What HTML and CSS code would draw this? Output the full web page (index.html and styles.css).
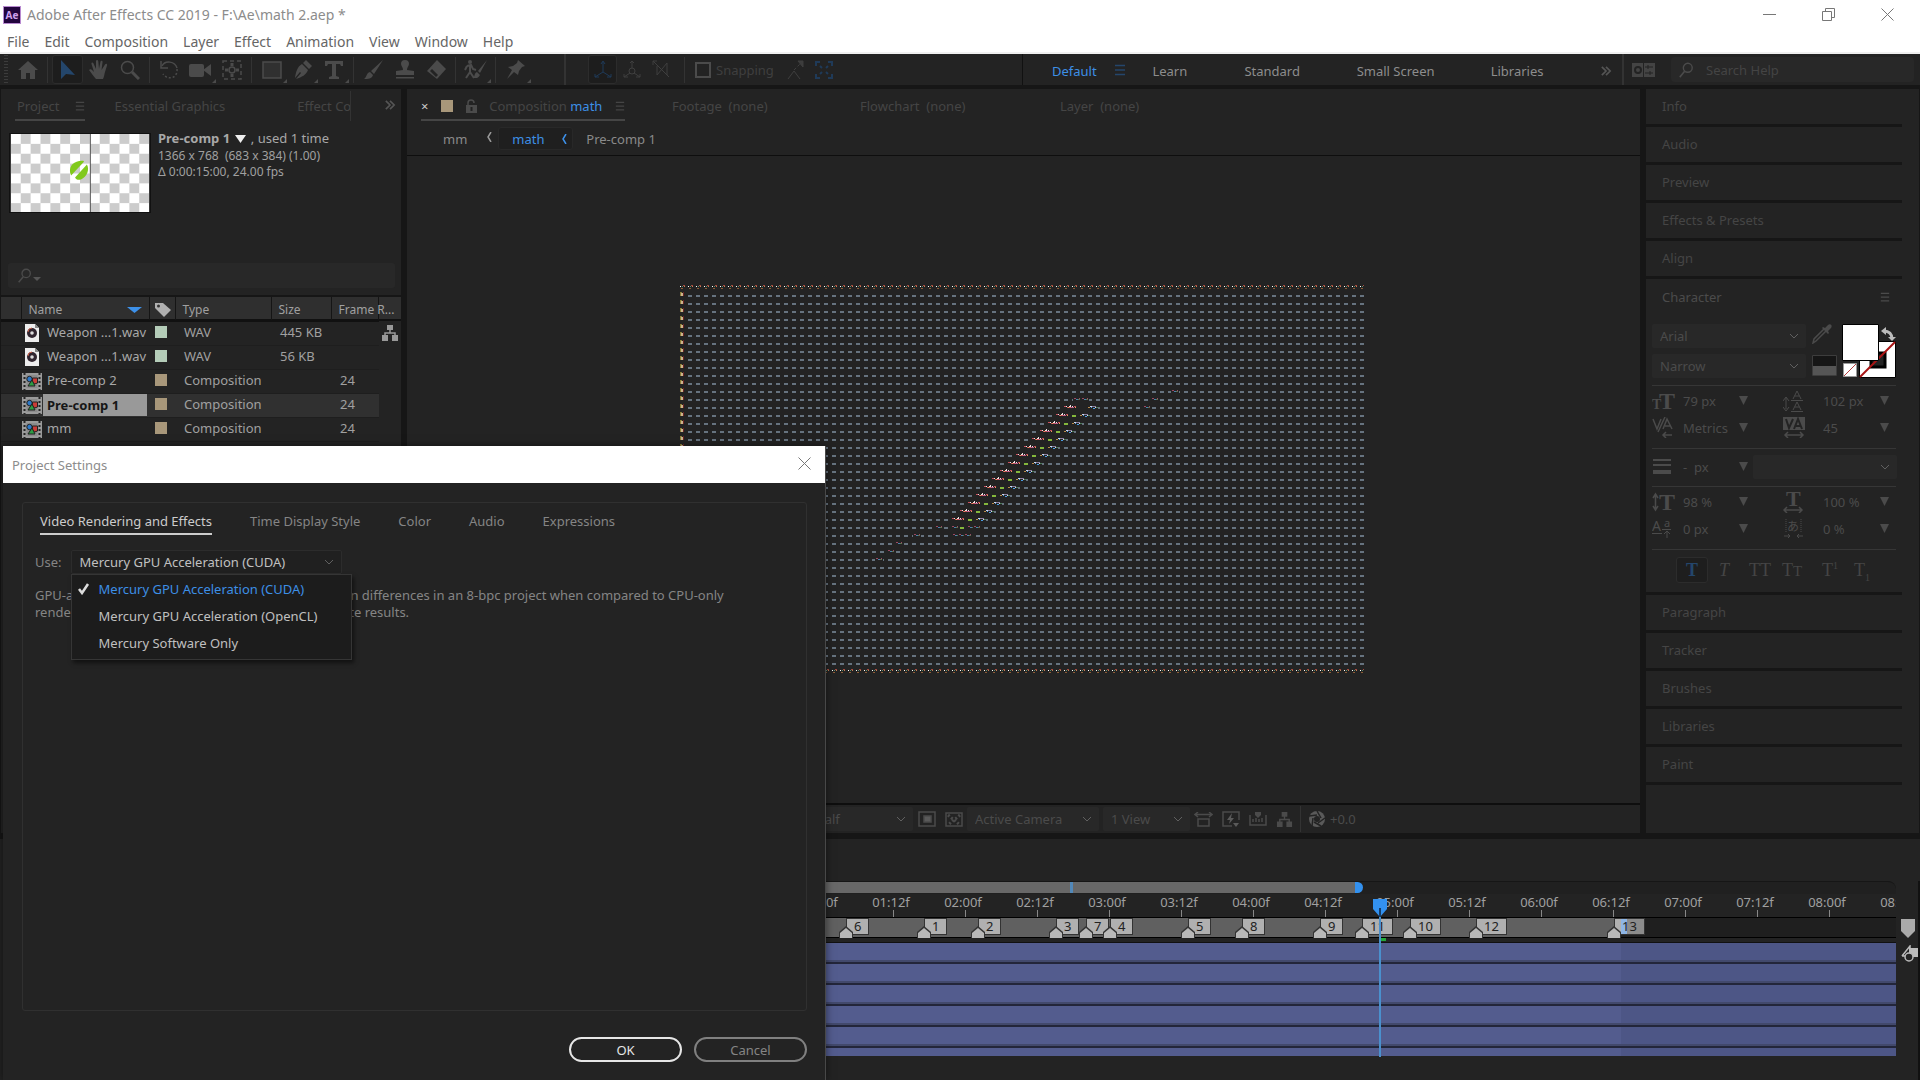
FILE: index.html
```html
<!DOCTYPE html>
<html lang="en">
<head>
    <meta charset="UTF-8">
    <meta name="viewport" content="width=device-width, initial-scale=1.0">
    <title>Adobe After Effects CC 2019</title>
    <link rel="stylesheet" href="styles.css">
</head>
<body>
    <svg class="defs" aria-hidden="true">
        <symbol id="menu" viewBox="0 0 10 12"><path d="M0 1.5h10M0 6h10M0 10.500h10" stroke="currentColor" stroke-width="1.500"/></symbol>
        <symbol id="more" viewBox="0 0 12 12"><path d="M1 1l5 5-5 5M6 1l5 5-5 5" fill="none" stroke="currentColor" stroke-width="2"/></symbol>
        <symbol id="tri" viewBox="0 0 9 9"><path d="M0 0h9L4.500 9z" fill="currentColor"/></symbol>
        <symbol id="search" viewBox="0 0 18 18"><circle cx="11" cy="6.500" r="5" fill="none" stroke="currentColor" stroke-width="1.600"/><path d="M7.500 10.500L2 17" stroke="currentColor" stroke-width="1.800"/></symbol>
        <symbol id="flow" viewBox="0 0 18 18"><path d="M6 1h6v5H6zM1 11h6v6H1zM11 11h6v6h-6z" fill="currentColor"/><path d="M9 5v4M4 12V9h10v3" fill="none" stroke="currentColor" stroke-width="1.500"/></symbol>
        <symbol id="wav" viewBox="0 0 20 20"><path d="M3 1h10l4 4v14H3z" fill="#ededed"/><path d="M13 1v4h4z" fill="#888"/><circle cx="10" cy="10" r="5" fill="#30252f"/><path d="M6 9a4 4 0 0 1 4-4" fill="none" stroke="#c85e48"/><circle cx="10" cy="10" r="1.800" fill="#ddd"/></symbol>
        <symbol id="comp" viewBox="0 0 20 17"><path d="M0 0h20v17H0z" fill="#9b9b9b"/><path d="M2.500 0v17M17.500 0v17" stroke="#252525" stroke-width="2" stroke-dasharray="2 2"/><path d="M4.500 2h11v13h-11z" fill="#8b8b8b"/><circle cx="7.500" cy="6" r="2.700" fill="#2d79c8" stroke="#222"/><path d="M10.500 5h5v5l-3 1-2-2z" fill="#ca3c37" stroke="#222"/><path d="M6 13l4-6 3 6z" fill="#2d9c43" stroke="#222"/></symbol>
    </svg>

    <div class="app">
        <header class="titlebar">
            <svg class="logo" viewBox="0 0 18 18"><rect width="18" height="18" fill="#b88ad0"/><rect x="1" y="1" width="16" height="16" fill="#22053e"/><text x="9" y="12.500" text-anchor="middle">Ae</text></svg>
            <h1>Adobe After Effects CC 2019 - F:\Ae\math 2.aep *</h1>
            <div class="window-buttons">
                <button aria-label="Minimize"><svg width="13" height="13"><path d="M0 6.500h13" stroke="#777"/></svg></button>
                <button aria-label="Restore"><svg width="13" height="13"><path d="M.5 3.500h9v9h-9zM3.500 3.500v-3h9v9h-3" fill="none" stroke="#777"/></svg></button>
                <button aria-label="Close"><svg width="13" height="13"><path d="M.5.5l12 12M12.500.5l-12 12" stroke="#777"/></svg></button>
            </div>
        </header>

        <nav class="menubar">
            <button>File</button>
            <button>Edit</button>
            <button>Composition</button>
            <button>Layer</button>
            <button>Effect</button>
            <button>Animation</button>
            <button>View</button>
            <button>Window</button>
            <button>Help</button>
        </nav>

        <div class="toolbar">
            <div class="tools">
                <svg class="grip" width="4" height="30"><path d="M2 0v30" stroke="#3c3c3c" stroke-width="4" stroke-dasharray="1 2"/></svg>
                <button aria-label="Home"><svg width="20" height="20"><path d="M10 1L0 10h3v9h5v-6h4v6h5v-9h3z"/></svg></button>
                <i class="sep"></i>
                <button class="active" aria-label="Selection"><svg width="20" height="20"><path d="M3 0v19l5-5 9 1z"/></svg></button>
                <button aria-label="Hand"><svg width="20" height="20"><path d="M7 19c-2-2-4-5-7-9 1-1.500 2.500-1 4 1L5 12 2.500 4C2 2 4 2 4.500 3.500L7 9V1.500c0-2 2-2 2.300 0L10 9l1.500-7.500c.5-1.500 2.500-1 2 1L12.500 10 16 4.500c1-1.300 2.500-.5 2 1L16 12c-1 4-1 5-2 7z"/></svg></button>
                <button aria-label="Zoom"><svg class="line" width="20" height="20"><circle cx="7.500" cy="7.500" r="6"/><path d="M12 12l7 7" stroke-width="3"/></svg></button>
                <i class="sep"></i>
                <button aria-label="Rotation"><svg class="line" width="20" height="20"><path d="M2 6c3-6 13-5 15 2" /><path d="M17 9c1 9-9 12-14 5" stroke-dasharray="2 2"/><path d="M1 1v7h7" /></svg></button>
                <button class="more-tools" aria-label="Camera"><svg width="23" height="18"><rect y="3" width="15" height="13" rx="2"/><path d="M14 9l8-6v12z"/></svg></button>
                <button aria-label="Pan Behind"><svg class="line" width="20" height="20"><path d="M1 1h18v18H1z" stroke-dasharray="4 3"/><circle cx="10" cy="10" r="3"/><path d="M10 3v3M10 14v3M3 10h3M14 10h3" stroke-width="3"/></svg></button>
                <i class="sep"></i>
                <button class="more-tools" aria-label="Rectangle"><svg class="line" width="20" height="18"><rect x="1" y="1" width="18" height="16" fill="#303030"/></svg></button>
                <button class="more-tools" aria-label="Pen"><svg width="20" height="20"><path d="M13 0l6 6-3 3-6-6zM9 4l6 6c-2 5-6 7-12 9l5-6-1-1-5 6C3 12 4 7 9 4z"/></svg></button>
                <button class="more-tools" aria-label="Type"><svg width="18" height="18"><path d="M0 0h18v5h-2l-1-2h-4v12l3 1v2H4v-2l3-1V3H3L2 5H0z"/></svg></button>
                <i class="sep"></i>
                <button aria-label="Brush"><svg width="20" height="20"><path d="M19 0L7 11l3 3zM6 12l3 3c-1 4-5 4-9 4 3-2 2-6 6-7z"/></svg></button>
                <button aria-label="Clone Stamp"><svg width="20" height="20"><path d="M8 10C8 7 6 6 6 4a4 4 0 0 1 8 0c0 2-2 3-2 6l7 1v4H1v-4zM1 17h18v1.500H1z"/></svg></button>
                <button aria-label="Eraser"><svg width="20" height="20"><path d="M11 0l9 9-9 10L1 11z"/><path d="M4 11l6 6 2-2-6-6z" fill="#232323"/></svg></button>
                <i class="sep"></i>
                <button class="more-tools" aria-label="Roto Brush"><svg width="24" height="20"><circle cx="6" cy="2" r="2"/><path d="M3 6l4-1 2 4 3 1M6 6v6l4 6M6 12l-4 6M3 6L1 10" fill="none" stroke="#4b4b4b" stroke-width="2"/><path d="M23 0L14 11l2 2zM13 12l3 3c-2 4-4 3-7 3 2-1 1-5 4-6z"/></svg></button>
                <i class="sep"></i>
                <button class="more-tools" aria-label="Puppet Pin"><svg width="20" height="20"><path d="M12 0l7 6-3 1-3 4-1 4-4-3-7 7 5-9-4-3 5-1 4-3z"/></svg></button>
            </div>
            <div class="tools axes">
                <button class="active" aria-label="Local Axis Mode"><svg class="line" width="20" height="20"><path d="M10 12V2M8 4l2-3 2 3M10 12l-8 5M2 14v3h4M10 12l8 5M18 14v3h-4"/></svg></button>
                <button aria-label="World Axis Mode"><svg class="line" width="20" height="20"><circle cx="10" cy="11" r="3"/><path d="M10 8V1M8 3l2-2 2 2M8 13l-6 4M2 14v3h4M12 13l6 4M18 14v3h-4"/></svg></button>
                <button aria-label="View Axis Mode"><svg class="line" width="20" height="20"><path d="M2 1l16 16M2 5V1h4M6 6v9l10-12v12l-4-4"/></svg></button>
                <i class="sep"></i>
                <label class="snap"><input type="checkbox">Snapping</label>
                <button aria-label="Snap edges"><svg class="line" width="20" height="20"><path d="M3 19l6-8 6 8"/><path d="M9 10l7-7" stroke-dasharray="3 2"/><path d="M13 1h5v6z" fill="#3c3c3c"/></svg></button>
                <button class="blue" aria-label="Snap features"><svg class="line" width="20" height="20"><path d="M2 6V2h4M14 2h4v4M18 14v4h-4M6 18H2v-4M6 6l2 2M14 6l-2 2M6 14l2-2M14 14l-2-2" stroke-width="2"/></svg></button>
            </div>
            <div class="workspaces">
                <button class="current">Default</button>
                <button class="ws-menu" aria-label="Workspace menu"><svg width="10" height="12"><use href="#menu"/></svg></button>
                <button>Learn</button>
                <button>Standard</button>
                <button>Small Screen</button>
                <button>Libraries</button>
                <button class="ws-more" aria-label="More workspaces"><svg width="12" height="10"><use href="#more"/></svg></button>
            </div>
            <div class="help">
                <svg width="23" height="14"><path d="M0 0h23v14H0z" fill="#444"/><circle cx="6" cy="7" r="3" fill="none" stroke="#232323" stroke-width="2"/><path d="M13 4h8M13 10h8M16 2v4M18 8v4M11.500 0v14" stroke="#232323"/></svg>
                <label class="help-box"><svg width="16" height="16"><use href="#search"/></svg><input type="text" placeholder="Search Help" aria-label="Search Help"></label>
            </div>
        </div>

        <main class="panels">
            <section class="panel project">
                <div class="tabs">
                    <button class="tab selected">Project <svg width="10" height="10"><use href="#menu"/></svg></button>
                    <button class="tab">Essential Graphics</button>
                    <button class="tab cut">Effect Controls</button>
                    <button class="tab-more" aria-label="More panels"><svg width="12" height="10"><use href="#more"/></svg></button>
                </div>
                <div class="item-info">
                    <svg class="thumb" viewBox="0 0 140 79">
                        <defs><pattern id="checker" width="20" height="20" patternUnits="userSpaceOnUse"><path d="M0 0h20v20H0z" fill="#fff"/><path d="M10 0h10v10H10zM0 10h10v10H0z" fill="#ccc"/></pattern></defs>
                        <rect width="140" height="79" fill="url(#checker)"/>
                        <path d="M80.500 0v79" stroke="#555"/>
                        <path d="M60 39c-1-7 4-12 12-12 1 0 2 0 2 1L61 42zM65 44l12-13c3 5 0 13-6 15-3 1-5 0-6-2z" fill="#81c91c"/>
                    </svg>
                    <div class="item-text">
                        <p class="item-name"><b>Pre-comp 1</b> <svg width="11" height="8"><path d="M0 0h11L5.500 8z" fill="#eee"/></svg> , used 1 time</p>
                        <p>1366 x 768 &nbsp;(683 x 384) (1.00)</p>
                        <p>Δ 0:00:15:00, 24.00 fps</p>
                    </div>
                </div>
                <label class="project-search"><svg width="15" height="15"><use href="#search"/></svg><svg width="8" height="4" viewBox="0 0 8 4"><path d="M0 0h8L4 4z" fill="#555"/></svg><input type="text" aria-label="Search project"></label>
                <div class="items">
                    <table>
                        <thead>
                            <tr><th class="c-icon"></th><th class="c-name">Name <svg width="15" height="6"><path d="M0 0h15L7.500 6z" fill="#3d91ea"/></svg></th><th class="c-tag"><svg width="16" height="15"><path d="M0 1h8l8 7-7 7-9-9z" fill="#b0b0b0"/><circle cx="3.500" cy="4" r="1.500" fill="#333"/></svg></th><th class="c-type">Type</th><th class="c-size">Size</th><th class="c-rate">Frame R...</th></tr>
                        </thead>
                        <tbody>
                            <tr><td><svg width="20" height="20"><use href="#wav"/></svg></td><td>Weapon ...1.wav</td><td><i class="swatch green"></i></td><td>WAV</td><td>445 KB</td><td></td></tr>
                            <tr><td><svg width="20" height="20"><use href="#wav"/></svg></td><td>Weapon ...1.wav</td><td><i class="swatch green"></i></td><td>WAV</td><td>56 KB</td><td></td></tr>
                            <tr><td><svg width="20" height="17"><use href="#comp"/></svg></td><td>Pre-comp 2</td><td><i class="swatch"></i></td><td>Composition</td><td></td><td>24</td></tr>
                            <tr class="picked"><td><svg width="20" height="17"><use href="#comp"/></svg></td><td><span>Pre-comp 1</span></td><td><i class="swatch"></i></td><td>Composition</td><td></td><td>24</td></tr>
                            <tr><td><svg width="20" height="17"><use href="#comp"/></svg></td><td>mm</td><td><i class="swatch"></i></td><td>Composition</td><td></td><td>24</td></tr>
                        </tbody>
                    </table>
                    <button class="flow-btn" aria-label="Flowchart"><svg width="18" height="18"><use href="#flow"/></svg></button>
                </div>
            </section>

            <section class="panel viewer">
                <div class="tabs">
                    <div class="tab selected comp-tab">
                        <button aria-label="Close tab">×</button>
                        <i class="swatch"></i>
                        <svg class="lock" width="11" height="14"><path d="M2 6V4c0-4 6-4 6 0" fill="none" stroke="#4b4b4b" stroke-width="1.500"/><path d="M0 6h11v8H0z" fill="#4b4b4b"/><path d="M5.500 8v4" stroke="#222" stroke-width="2"/></svg>
                        <span>Composition <b>math</b></span>
                        <svg width="10" height="10"><use href="#menu"/></svg>
                    </div>
                    <button class="tab footage">Footage &nbsp;(none)</button>
                    <button class="tab flowchart">Flowchart &nbsp;(none)</button>
                    <button class="tab">Layer &nbsp;(none)</button>
                </div>
                <nav class="crumbs">
                    <button>mm</button>
                    <svg width="5" height="10"><path d="M4 0L1 5l3 5" fill="none" stroke="#999" stroke-width="1.500"/></svg>
                    <button class="here">math <svg width="5" height="10"><path d="M4 0L1 5l3 5" fill="none" stroke="#3d91ea" stroke-width="1.500"/></svg></button>
                    <button>Pre-comp 1</button>
                </nav>
                <div class="stage">
                    <svg class="frame" width="684" height="388" shape-rendering="crispEdges">
                        <defs>
                            <pattern id="dash" width="8" height="8" patternUnits="userSpaceOnUse"><path d="M0 0h4v2H0z" fill="#66737f"/></pattern>
                            <pattern id="edge-h" width="8" height="4" patternUnits="userSpaceOnUse"><path d="M0 1h1v1H0z" fill="#fff"/><path d="M3 0h2v1H3z" fill="#a34a3e"/><path d="M2 1h1v1H2z" fill="#5d8f70"/><path d="M4 1h1v1H4z" fill="#c87a52"/><path d="M1 3h2v1H1z" fill="#8b5b35"/></pattern>
                            <pattern id="edge-v" width="4" height="8" patternUnits="userSpaceOnUse"><path d="M0 0h2v4H0z" fill="#8d8038"/><path d="M1 1h2v3H1z" fill="#cdb48e"/><path d="M3 0h1v4H3z" fill="#6d2525"/></pattern>
                            <g id="streak">
                                <path d="M-17 0h35v4h-35z" fill="#232323"/>
                                <path d="M-16 1h2v1h-2zM-13 2h4v1h-4zM-6 1h2v1h-2z" fill="#c8505e"/>
                                <path d="M-14 1h1v1h-1zM-11 1h2v1h-2zM-8 1h1v1h-1zM-10 0h1v1h-1z" fill="#efe2e2"/>
                                <path d="M-9 2h3v1h-3z" fill="#c0608c"/>
                                <path d="M-12 2h1v1h-1zM-5 2h1v1h-1z" fill="#f0a05a"/>
                                <path d="M8 2h2v1H8z" fill="#b88a4a"/>
                                <path d="M10 1h2v1h-2zM15 2h1v1h-1z" fill="#cfd8e8"/>
                                <path d="M11 2h1v1h-1zM13 3h2v1h-2z" fill="#4a9ce0"/>
                                <path d="M12 1h4v1h-4z" fill="#8a7fa0"/>
                                <path d="M16 2h2v1h-2z" fill="#4c7a58"/>
                            </g>
                            <g id="core"><use href="#streak"/><path d="M0 2h4v2H0z" fill="#84b83c"/></g>
                            <g id="speck"><path d="M-1 0h8v4h-8z" fill="#232323"/><path d="M0 1h2v1H0zM5 1h1v1H5z" fill="#9b4862"/><path d="M2 2h2v1H2z" fill="#4d7fae"/><path d="M4 2h2v1H4z" fill="#5d7050"/></g>
                        </defs>
                        <svg x="8" y="10" width="676" height="370"><rect width="676" height="370" fill="url(#dash)"/></svg>
                        <rect width="684" height="4" fill="url(#edge-h)"/>
                        <svg x="0" y="384" width="684" height="4"><rect width="684" height="4" fill="url(#edge-h)"/></svg>
                        <svg x="0" y="7" width="4" height="376"><rect width="4" height="376" fill="url(#edge-v)"/></svg>
                        <use href="#speck" x="394" y="112"/>
                        <use href="#speck" x="402" y="112"/>
                        <use href="#streak" x="400" y="120"/>
                        <use href="#core" x="392" y="128"/>
                        <use href="#core" x="384" y="136"/>
                        <use href="#core" x="376" y="144"/>
                        <use href="#core" x="368" y="152"/>
                        <use href="#core" x="360" y="160"/>
                        <use href="#core" x="352" y="168"/>
                        <use href="#core" x="344" y="176"/>
                        <use href="#core" x="336" y="184"/>
                        <use href="#core" x="328" y="192"/>
                        <use href="#core" x="320" y="200"/>
                        <use href="#core" x="312" y="208"/>
                        <use href="#core" x="304" y="216"/>
                        <use href="#core" x="296" y="224"/>
                        <use href="#core" x="288" y="232"/>
                        <use href="#speck" x="272" y="240"/>
                        <path d="M280 242h4v2h-4z" fill="#84b83c"/>
                        <use href="#speck" x="288" y="240"/>
                        <use href="#speck" x="294" y="240"/>
                        <use href="#speck" x="273" y="248"/>
                        <use href="#speck" x="279" y="248"/>
                        <use href="#speck" x="285" y="248"/>
                        <use href="#speck" x="492" y="104"/>
                        <use href="#speck" x="472" y="112"/>
                        <use href="#speck" x="464" y="120"/>
                        <use href="#speck" x="256" y="240"/>
                        <use href="#speck" x="234" y="248"/>
                        <use href="#speck" x="216" y="256"/>
                        <use href="#speck" x="208" y="264"/>
                        <use href="#speck" x="196" y="272"/>
                    </svg>
                </div>
                <div class="view-bar">
                    <select class="res" aria-label="Resolution"><option>Half</option></select>
                    <button aria-label="Region of Interest"><svg class="line" width="18" height="16"><path d="M1 1h16v14H1z"/><path d="M6 5h7v6H6z" fill="#5a5a5a"/></svg></button>
                    <button aria-label="Transparency Grid"><svg class="line" width="18" height="15"><path d="M1 1h16v13H1z"/><path d="M3 3l12 10M15 3L3 13" stroke-dasharray="2 2" stroke-width="3"/></svg></button>
                    <select class="cam" aria-label="3D View"><option>Active Camera</option></select>
                    <select class="views" aria-label="View Layout"><option>1 View</option></select>
                    <button aria-label="Pixel Aspect Ratio"><svg class="line" width="19" height="15"><path d="M1 2.500h17M4 0L1 2.500 4 5M15 0l3 2.500L15 5M4 7h11v7H4z"/></svg></button>
                    <button aria-label="Fast Previews"><svg class="line" width="18" height="17"><path d="M10 15H1V1h16v8"/><path d="M10 2L5 9h3l-1 4 5-6H9zM11 12h6l-3 4z" fill="#5a5a5a" stroke="none"/></svg></button>
                    <button aria-label="Timeline"><svg class="line" width="18" height="14"><path d="M1 3v10h16V3M4 10V7M7 10V6M10 10V7M13 10V6"/><path d="M6 0h6v3L9 6 6 3z" fill="#4b4b4b" stroke="none"/></svg></button>
                    <button aria-label="Flowchart"><svg width="17" height="17"><use href="#flow"/></svg></button>
                    <i class="sep"></i>
                    <button aria-label="Reset Exposure"><svg width="18" height="18"><circle cx="9" cy="9" r="8" fill="#5a5a5a"/><circle cx="9" cy="9" r="3" fill="#232323"/><path d="M9 1l4 7M17 8l-7 5M13 16l-7-4M4 16l1-8M1 6l8-1" fill="none" stroke="#232323" stroke-width="1.500"/></svg></button>
                    <span>+0.0</span>
                </div>
            </section>

            <aside class="panel side">
                <div class="side-list">
                    <button class="side-tab">Info</button>
                    <button class="side-tab">Audio</button>
                    <button class="side-tab">Preview</button>
                    <button class="side-tab">Effects &amp; Presets</button>
                    <button class="side-tab">Align</button>
                    <div class="character">
                        <h2>Character <svg width="10" height="10"><use href="#menu"/></svg></h2>
                        <div class="fonts">
                            <div class="font-selects">
                                <select aria-label="Font family"><option>Arial</option></select>
                                <select aria-label="Font style"><option>Narrow</option></select>
                            </div>
                            <div class="pickers">
                                <svg width="20" height="20"><path d="M14 7L4 17l-3 2 1-4L12 5" fill="none" stroke="#4b4b4b" stroke-width="1.500"/><path d="M10 4l6 6 1-1-1-2 3-3c2-3-1-5-3-3l-3 3-2-1z" fill="#4b4b4b"/></svg>
                                <svg width="25" height="21"><path d="M.5.5h24v20H.5z" fill="#161616" stroke="#3d3d3d"/><path d="M1 11h23v9H1z" fill="#555"/></svg>
                            </div>
                            <svg width="54" height="54">
                                <path d="M17.500 17.500h36v36h-36z" fill="#fff" stroke="#000"/><path d="M29 29h14v14H29z" fill="#232323" stroke="#000" stroke-width="3"/><path d="M18 53l35-35" stroke="#a81414" stroke-width="2"/>
                                <path d="M.5.5h36v36H.5z" fill="#fff" stroke="#000"/>
                                <path d="M1.500 39.500h13v13h-13z" fill="#fff" stroke="#999"/><path d="M2 52l12-12" stroke="#b84040"/>
                                <path d="M42 7c5 0 8 3 8 8" fill="none" stroke="#bbb" stroke-width="3"/><path d="M39 7l5-4v8zM46 13h8l-4 4z" fill="#bbb"/>
                            </svg>
                        </div>
                        <div class="metrics">
                            <svg width="24" height="20"><text class="ic" x="0" y="18" font-size="14">T</text><text class="ic" x="7" y="18" font-size="24">T</text></svg><input type="text" value="79 px" aria-label="Font size"><svg class="tri"><use href="#tri"/></svg>
                            <svg width="20" height="22"><path d="M10 9l4-8 4 8M12 6h4M10 20l4-8 4 8M12 17h4" fill="none" stroke="#4b4b4b"/><path d="M3 8v11M0 11l3-4 3 4M0 17l3 4 3-4M8 10.500h12M8 21.500h12" fill="none" stroke="#4b4b4b"/></svg><input type="text" value="102 px" aria-label="Leading"><svg class="tri"><use href="#tri"/></svg>
                            <svg width="22" height="21"><path d="M1 2l4 10 4-10M6 15L13 0M11 12l4-10 5 10M13 9h5" fill="none" stroke="#4b4b4b" stroke-width="1.500"/><path d="M11 18h9M14 15l-3 3 3 3" fill="none" stroke="#4b4b4b" stroke-width="1.500"/></svg><input type="text" value="Metrics" aria-label="Kerning"><svg class="tri"><use href="#tri"/></svg>
                            <svg width="23" height="21"><path d="M0 0h22v13H0z" fill="#4b4b4b"/><path d="M3 2l3 9 4-9M11 12l4-10 4 10M13 9h5" fill="none" stroke="#232323" stroke-width="2"/><path d="M2 18h18M5 15l-3 3 3 3M17 15l3 3-3 3" fill="none" stroke="#4b4b4b" stroke-width="1.500"/></svg><input type="text" value="45" aria-label="Tracking"><svg class="tri"><use href="#tri"/></svg>
                        </div>
                        <div class="stroke-row">
                            <svg width="20" height="15"><path d="M1 1h18M1 6h18" stroke="#4b4b4b" stroke-width="2"/><path d="M1 13h18" stroke="#4b4b4b" stroke-width="4"/></svg><input type="text" value="-  px" aria-label="Stroke width"><svg class="tri"><use href="#tri"/></svg>
                            <select aria-label="Stroke style"><option></option></select>
                        </div>
                        <div class="metrics">
                            <svg width="24" height="20"><text class="ic" x="7" y="18" font-size="24">T</text><path d="M3.500 3v14M1 6l2.500-4L6 6M1 14l2.500 4L6 14" fill="none" stroke="#4b4b4b" stroke-width="1.500"/></svg><input type="text" value="98 %" aria-label="Vertical scale"><svg class="tri"><use href="#tri"/></svg>
                            <svg width="22" height="22"><text class="ic" x="3" y="15" font-size="22">T</text><path d="M1 19h18M4 16l-3 3 3 3M16 16l3 3-3 3" fill="none" stroke="#4b4b4b" stroke-width="1.500"/></svg><input type="text" value="100 %" aria-label="Horizontal scale"><svg class="tri"><use href="#tri"/></svg>
                            <svg width="22" height="20"><text class="thin" x="0" y="12" font-size="14">A</text><text class="thin" x="12" y="8" font-size="11">a</text><path d="M0 14.500h10M10 10.500h9M15 19v-7M12 15l3-3 3 3" fill="none" stroke="#4b4b4b"/></svg><input type="text" value="0 px" aria-label="Baseline shift"><svg class="tri"><use href="#tri"/></svg>
                            <svg width="22" height="20"><text class="thin" x="4" y="12" font-size="12">あ</text><path d="M3 0v13M18 0v13" stroke="#4b4b4b" stroke-dasharray="1 1"/><path d="M1 17h6M5 15l2 2-2 2M20 17h-6M16 15l-2 2 2 2" fill="none" stroke="#4b4b4b"/></svg><input type="text" value="0 %" aria-label="Tsume"><svg class="tri"><use href="#tri"/></svg>
                        </div>
                        <div class="faux">
                            <button class="on"><b>T</b></button>
                            <button><em>T</em></button>
                            <button class="caps">TT</button>
                            <button>T<small>T</small></button>
                            <button class="super">T<sup>1</sup></button>
                            <button>T<sub>1</sub></button>
                        </div>
                    </div>
                    <button class="side-tab">Paragraph</button>
                    <button class="side-tab">Tracker</button>
                    <button class="side-tab">Brushes</button>
                    <button class="side-tab">Libraries</button>
                    <button class="side-tab">Paint</button>
                </div>
            </aside>
        </main>

        <section class="panel timeline">
            <div class="layers"></div>
            <div class="track">
                <div class="navigator"><div class="range"><i></i></div></div>
                <ol class="ruler">
                    <li>01:00f</li><li>01:12f</li><li>02:00f</li><li>02:12f</li><li>03:00f</li><li>03:12f</li><li>04:00f</li><li>04:12f</li><li>05:00f</li><li>05:12f</li><li>06:00f</li><li>06:12f</li><li>07:00f</li><li>07:12f</li><li>08:00f</li><li>08:12f</li>
                </ol>
                <!-- markers: 6px per frame -->
                <div class="markers">
                    <div class="work-area"></div>
                    <span class="marker" style="left: 20px">6</span>
                    <span class="marker" style="left: 98px">1</span>
                    <span class="marker" style="left: 152px">2</span>
                    <span class="marker" style="left: 230px">3</span>
                    <span class="marker" style="left: 260px">7</span>
                    <span class="marker" style="left: 284px">4</span>
                    <span class="marker" style="left: 362px">5</span>
                    <span class="marker" style="left: 416px">8</span>
                    <span class="marker" style="left: 494px">9</span>
                    <span class="marker" style="left: 536px">11</span>
                    <span class="marker" style="left: 584px">10</span>
                    <span class="marker" style="left: 650px">12</span>
                    <span class="marker end" style="left: 788px">13</span>
                </div>
                <div class="cache"><i></i></div>
                <div class="bars">
                    <div class="bar"></div>
                    <div class="bar"></div>
                    <div class="bar"></div>
                    <div class="bar"></div>
                    <div class="bar"></div>
                    <div class="bar"></div>
                </div>
                <svg class="playhead" width="14" height="158"><path d="M0 0h14v10l-7 8-7-8z" fill="#3391ef"/><path d="M7 9v9" stroke="#153d68" stroke-width="2"/><path d="M7 18v140" stroke="#4a90cd" stroke-width="2"/></svg>
            </div>
            <div class="track-side">
                <svg width="14" height="19"><path d="M0 0h14v12l-7 7-7-7z" fill="#aaa"/></svg>
                <svg width="17" height="18"><path d="M8 3h9v9H8z" fill="#bbb"/><path d="M1 11L9 1v9M1 11h6" fill="none" stroke="#bbb" stroke-width="1.500"/><circle cx="8" cy="12" r="4" fill="#232323" stroke="#bbb" stroke-width="1.500"/></svg>
            </div>
        </section>
    </div>

    <div class="dialog" role="dialog" aria-label="Project Settings">
        <div class="dialog-title">
            <h2>Project Settings</h2>
            <button aria-label="Close"><svg width="13" height="13"><path d="M.5.5l12 12M12.500.5l-12 12" stroke="#777"/></svg></button>
        </div>
        <div class="dialog-body">
            <div class="group">
                <div class="dialog-tabs">
                    <button class="selected">Video Rendering and Effects</button>
                    <button>Time Display Style</button>
                    <button>Color</button>
                    <button>Audio</button>
                    <button>Expressions</button>
                </div>
                <div class="use-row">
                    <label for="renderer">Use:</label>
                    <div class="dropdown">
                        <select id="renderer"><option>Mercury GPU Acceleration (CUDA)</option></select>
                        <ul class="popup">
                            <li class="chosen"><button><svg width="12" height="12"><path d="M1 6l3 4 6-9" fill="none" stroke="#ddd" stroke-width="2.500"/></svg>Mercury GPU Acceleration (CUDA)</button></li>
                            <li><button>Mercury GPU Acceleration (OpenCL)</button></li>
                            <li><button>Mercury Software Only</button></li>
                        </ul>
                    </div>
                </div>
                <p class="note">GPU-accelerated effects may produce small precision differences in an 8-bpc project when compared to CPU-only<br>rendering. Use a 32-bpc project for the most accurate results.</p>
            </div>
            <div class="dialog-buttons">
                <button class="ok">OK</button>
                <button>Cancel</button>
            </div>
        </div>
    </div>
</body>
</html>
```
FILE: styles.css
```css
* {
    box-sizing: border-box;
}
body {
    margin: 0;
    background: #161616;
    color: #a0a0a0;
    font-family: "Noto Sans", "Noto Sans CJK JP", sans-serif;
    font-size: 13px;
    line-height: 16px;
}
h1, h2, p, ul, ol {
    margin: 0;
    padding: 0;
    font-size: inherit;
    font-weight: normal;
    list-style: none;
}
button, input, select {
    font: inherit;
    color: inherit;
    background: none;
    border: none;
    padding: 0;
    margin: 0;
    min-width: 0;
}
button {
    white-space: nowrap;
}
select {
    appearance: none;
    background: #282828 url("data:image/svg+xml,%3Csvg xmlns='http://www.w3.org/2000/svg' width='10' height='6'%3E%3Cpath d='M1 1l4 4 4-4' fill='none' stroke='%23606060'/%3E%3C/svg%3E") no-repeat right 7px center;
    border-radius: 2px;
    padding: 0 8px;
}
svg {
    flex: none;
}
.defs {
    display: none;
}
.line {
    fill: none;
    stroke: currentColor;
    stroke-width: 1.5;
}
.app {
    height: 100vh;
    display: flex;
    flex-direction: column;
    overflow: hidden;
}

/* window chrome */
.titlebar {
    height: 29px;
    display: flex;
    align-items: center;
    gap: 6px;
    padding: 0 20px 0 3px;
    background: #fff;
    color: #8c8c8c;
    font-size: 14px;
}
.logo {
    width: 18px;
    height: 18px;
}
.logo text {
    font-size: 10px;
    font-weight: bold;
    fill: #cfa0ee;
}
.window-buttons {
    margin-left: auto;
    display: flex;
    gap: 46px;
    padding-right: 6px;
}
.window-buttons svg {
    display: block;
}
.menubar {
    height: 25px;
    display: flex;
    gap: 15px;
    padding: 2px 7px 0;
    background: #fff;
    border-bottom: 2px solid #f0f0f0;
    color: #666;
    font-size: 14px;
}

/* toolbar */
.toolbar {
    height: 31px;
    display: flex;
    background: #232323;
    color: #4b4b4b;
}
.tools {
    display: flex;
    align-items: center;
    height: 31px;
}
.tools:first-child {
    width: 566px;
    border-right: 2px solid #333;
}
.grip {
    margin: 0 4px;
}
.tools button {
    width: 31px;
    height: 29px;
    display: flex;
    align-items: center;
    justify-content: center;
    position: relative;
}
.tools button svg {
    fill: currentColor;
}
.tools button svg.line {
    fill: none;
}
.tools .active {
    background: #1d1d1d;
    border: 1px solid #2c2c2c;
    border-radius: 3px;
    color: #24466b;
}
.more-tools::after {
    content: "";
    position: absolute;
    right: 0;
    bottom: 1px;
    border-left: 4px solid transparent;
    border-bottom: 4px solid #4b4b4b;
}
.sep {
    width: 1px;
    height: 26px;
    margin: 0 4px;
    background: #333;
}
.axes {
    padding-left: 22px;
    flex: 1;
    color: #3f3f3f;
}
.axes button {
    width: 29px;
}
.axes .sep {
    margin: 0 7px 0 9px;
}
.axes .active, .axes .blue {
    color: #1f3a58;
}
.axes .line {
    stroke-width: 1px;
}
.snap {
    display: flex;
    align-items: center;
    gap: 5px;
    padding: 0 7px 0 3px;
}
.snap input {
    appearance: none;
    width: 16px;
    height: 16px;
    border: 2px solid #4b4b4b;
}
.workspaces {
    display: flex;
    align-items: center;
    width: 602px;
    border-left: 1px solid #111;
    border-right: 2px solid #333;
    padding: 2px 10px 0 29px;
    gap: 58px;
    color: #8d8d8d;
}
.workspaces .current {
    color: #3d8fe6;
}
.workspaces .ws-menu {
    margin: 0 -30px 0 -39px;
    color: #24466b;
}
.workspaces .ws-more {
    color: #555;
    margin-left: auto;
}
.help {
    display: flex;
    align-items: center;
    gap: 16px;
    width: 296px;
    padding: 0 6px 0 8px;
}
.help-box {
    flex: 1;
    display: flex;
    align-items: center;
    gap: 12px;
    height: 25px;
    padding-left: 7px;
    background: #282828;
    border-radius: 4px;
}
.help-box input {
    flex: 1;
}
input::placeholder {
    color: #444;
    opacity: 1;
}

/* panels */
.panels {
    flex: 1;
    min-height: 0;
    display: grid;
    grid-template-columns: 400px 1fr 273px;
    gap: 6px;
    padding: 4px 1px 6px;
}
.panel {
    background: #232323;
    min-width: 0;
}
.tabs {
    display: flex;
    height: 32px;
    align-items: flex-end;
}
.tab {
    height: 30px;
    padding: 0 0 1px;
    color: #454545;
    text-align: left;
}
.tab.selected {
    border-bottom: 2px solid #454545;
    padding: 1px 0 0;
    display: flex;
    align-items: center;
    justify-content: space-between;
    gap: 16px;
}
.project .tabs {
    padding-left: 14px;
    gap: 29px;
}
.project .selected {
    padding-left: 2px;
}
.project .cut {
    width: 54px;
    overflow: hidden;
    border-right: 1px solid #333;
    margin-left: 43px;
}
.tab-more {
    color: #555;
    margin: 0 5px 8px auto;
}
.item-info {
    display: flex;
    gap: 7px;
    height: 130px;
    padding: 12px 8px 0;
    font-size: 12px;
}
.thumb {
    width: 142px;
    height: 80px;
    border: 1px solid #111;
}
.item-text {
    margin-top: -4px;
}
.item-info .item-name {
    font-size: 13px;
    line-height: 19px;
    color: #a8a8a8;
}
.item-name svg {
    margin: 0 1px 0 2px;
}
.project-search {
    display: flex;
    align-items: center;
    gap: 1px;
    height: 25px;
    margin: 12px 6px 7px 7px;
    padding-left: 9px;
    background: #282828;
    border-radius: 3px;
    color: #4b4b4b;
}
.project-search svg + svg {
    margin-top: 7px;
}
.items {
    display: flex;
    border-top: 2px solid #161616;
    background: linear-gradient(#2f2f2f 22px, #111 22px, #111 24px, transparent 24px);
}
table {
    width: 378px;
    table-layout: fixed;
    border-collapse: collapse;
}
th {
    height: 24px;
    padding: 2px 0 0 7px;
    font-size: 12px;
    font-weight: normal;
    text-align: left;
    border-right: 1px solid #151515;
    border-bottom: 2px solid #111;
    white-space: nowrap;
}
td {
    height: 24px;
    padding: 0 0 2px 9px;
    border-bottom: 1px solid #1e1e1e;
    white-space: nowrap;
}
td svg, td .swatch {
    display: block;
}
td:first-child {
    padding: 0 0 0 21px;
}
.c-icon {
    width: 20px;
}
.c-name {
    width: 128px;
}
.c-name svg {
    margin-left: 62px;
    vertical-align: middle;
}
.c-tag {
    width: 26px;
    padding-left: 5px;
}
.c-tag svg {
    display: block;
}
.c-type {
    width: 96px;
}
.c-size {
    width: 60px;
}
td:nth-child(2) {
    padding-left: 26px;
    color: #a8a8a8;
}
td:nth-child(3) {
    padding-left: 6px;
}
.picked {
    background: #303030;
}
.picked td:nth-child(2) {
    padding-bottom: 0;
}
.picked span {
    display: block;
    margin: 0 2px 0 -4px;
    padding: 2px 4px;
    line-height: 18px;
    background: #999;
    color: #161616;
    font-weight: bold;
}
.swatch {
    width: 12px;
    height: 12px;
    background: #a8977a;
}
.swatch.green {
    background: #b4ccb8;
}
.flow-btn {
    align-self: flex-start;
    margin: 27px 0 0 2px;
    color: #999;
}

/* composition viewer */
.viewer {
    display: flex;
    flex-direction: column;
}
.viewer .tabs {
    padding-left: 14px;
}
.comp-tab {
    width: 204px;
    margin-right: 47px;
}
.tab.comp-tab {
    gap: 0;
}
.comp-tab > button {
    color: #ccc;
}
.comp-tab b {
    color: #3d8fe6;
    font-weight: normal;
}
.footage {
    width: 188px;
}
.flowchart {
    width: 200px;
}
.crumbs {
    display: flex;
    align-items: center;
    height: 35px;
    padding: 1px 0 0 36px;
    border-bottom: 1px solid #0e0e0e;
    color: #8a8a8a;
}
.crumbs > svg {
    margin: 0 6px 4px 20px;
}
.here {
    display: flex;
    align-items: center;
    justify-content: space-between;
    width: 75px;
    height: 23px;
    margin-right: 13px;
    padding: 0 5px 0 13px;
    background: #1f1f1f;
    border: 1px solid #282828;
    border-radius: 3px;
    color: #3d8fe6;
}
.stage {
    flex: 1;
    min-height: 0;
    display: flex;
    align-items: center;
    justify-content: center;
    padding: 0 3px 1px 0;
}
.view-bar {
    display: flex;
    align-items: center;
    height: 30px;
    border-top: 2px solid #0e0e0e;
    padding-left: 400px;
    color: #4b4b4b;
}
.view-bar button {
    width: 27px;
    height: 24px;
    display: flex;
    align-items: center;
    justify-content: center;
}
.view-bar select {
    height: 24px;
}
.view-bar .res {
    width: 106px;
}
.view-bar .cam {
    width: 132px;
    margin-right: 4px;
}
.view-bar .views {
    width: 87px;
}
.view-bar .sep {
    margin: 0 2px;
}

/* right panels */
.side-list {
    width: 256px;
}
.side-tab {
    display: block;
    width: 100%;
    height: 38px;
    padding: 0 0 2px 16px;
    text-align: left;
    color: #454545;
    border-bottom: 3px solid #161616;
}
.character {
    height: 316px;
    border-bottom: 3px solid #161616;
    padding: 0 6px;
    color: #4b4b4b;
}
.character h2 {
    display: flex;
    justify-content: space-between;
    align-items: center;
    height: 36px;
    padding: 0 6px 0 10px;
}
.fonts {
    display: flex;
    justify-content: space-between;
    padding: 9px 0 7px;
    border-bottom: 1px solid #363636;
}
.font-selects {
    display: grid;
    gap: 5px;
    width: 154px;
}
.fonts select {
    height: 24px;
}
.pickers {
    display: grid;
    gap: 8px;
}
.metrics {
    display: grid;
    grid-template-columns: 31px 56px 44px 40px 57px 1fr;
    grid-auto-rows: 27px;
    align-items: center;
    padding: 1px 0 7px;
    border-bottom: 1px solid #363636;
}
.metrics input, .stroke-row input {
    width: 100%;
}
.tri {
    width: 9px;
    height: 9px;
}
.ic {
    font-family: "Liberation Serif", serif;
    font-weight: bold;
    fill: #4b4b4b;
}
.thin {
    fill: #4b4b4b;
}
.stroke-row {
    display: grid;
    grid-template-columns: 31px 56px 14px 144px;
    align-items: center;
    height: 38px;
    padding-bottom: 2px;
    border-bottom: 1px solid #363636;
}
.stroke-row select {
    height: 24px;
}
.faux {
    display: flex;
    align-items: center;
    height: 40px;
    padding-left: 24px;
    font-family: "Liberation Serif", serif;
    font-size: 18px;
    color: #454545;
}
.faux button {
    width: 32px;
    height: 26px;
}
.faux .on {
    background: #1e1e1e;
    border: 1px solid #2c2c2c;
    border-radius: 3px;
    color: #24466b;
}
.faux .caps {
    margin-left: 4px;
}
.faux .super {
    margin-left: 6px;
}
.faux sup, .faux sub {
    font-size: 10px;
    line-height: 0;
}

/* timeline */
.timeline {
    height: 241px;
    display: flex;
    padding-top: 42px;
}
.layers {
    width: 826px;
}
.track {
    position: relative;
    flex: 1;
    min-width: 0;
}
.navigator {
    height: 13px;
    background: #202020;
    border-top: 1px solid #161616;
    border-radius: 0 8px 0 0;
}
.range {
    width: 537px;
    height: 11px;
    background: #686868;
    border-right: 8px solid #3391ef;
    border-radius: 0 6px 6px 0;
}
.range i {
    display: block;
    width: 3px;
    height: 11px;
    margin-left: 244px;
    background: #5288b8;
}
.ruler {
    display: flex;
    height: 24px;
    overflow: hidden;
    border-bottom: 1px solid #000;
}
.ruler li {
    flex: 0 0 72px;
    text-align: center;
    background: linear-gradient(#888, #888) no-repeat 38px 100% / 1px 7px;
}
.ruler li:first-child {
    margin-left: -43px;
}
.markers {
    position: relative;
    height: 20px;
    border-bottom: 1px solid #000;
    background: #1f1f1f;
}
.work-area {
    width: 795px;
    height: 19px;
    background: #606060;
}
.marker {
    position: absolute;
    top: 0;
    height: 17px;
    padding: 0 7px;
    line-height: 14px;
    background: #b0b0b0;
    border: 1px solid #333;
    color: #222;
}
.marker::before, .marker::after {
    content: "";
    position: absolute;
    left: -8px;
    top: 7px;
    width: 14px;
    height: 12px;
    background: #333;
    clip-path: polygon(50% 0, 100% 50%, 100% 100%, 0 100%, 0 50%);
}
.marker::after {
    left: -7px;
    top: 9px;
    width: 12px;
    height: 10px;
    background: #b8b8b8;
}
.marker.end {
    background: linear-gradient(90deg, #b0b0b0 6px, #8eb6e6 6px, #8eb6e6 12px, #8c8c8c 12px);
}
.cache {
    height: 5px;
    border-bottom: 1px solid #111;
}
.cache i {
    display: block;
    width: 6px;
    height: 3px;
    margin-left: 554px;
    background: #21a93a;
}
.bars {
    height: 113px;
    overflow: hidden;
}
.bar {
    height: 21px;
    border-bottom: 2px solid #23263a;
    background: linear-gradient(90deg, #535c8e 795px, #4d5686 795px);
    box-shadow: inset 0 -2px #42496c;
}
.playhead {
    position: absolute;
    left: 547px;
    top: 18px;
}
.track-side {
    width: 24px;
    padding: 38px 0 0 5px;
    border-right: 2px solid #111;
}
.track-side svg {
    display: block;
    margin-bottom: 7px;
}

/* project settings dialog */
.dialog {
    position: absolute;
    left: 3px;
    top: 446px;
    bottom: 0;
    width: 823px;
    display: flex;
    flex-direction: column;
    background: #232323;
    border-right: 1px solid #484848;
    box-shadow: 0 0 8px rgba(0, 0, 0, 0.5);
}
.dialog-title {
    display: flex;
    align-items: center;
    justify-content: space-between;
    height: 37px;
    padding: 0 14px 0 9px;
    background: #fff;
    color: #8c8c8c;
}
.dialog-body {
    flex: 1;
    display: flex;
    flex-direction: column;
    padding: 19px 18px 18px 19px;
}
.group {
    flex: 1;
    border: 1px solid #303030;
    border-radius: 3px;
    padding: 8px 12px;
}
.dialog-tabs {
    display: flex;
    gap: 38px;
    padding-left: 5px;
    color: #858585;
}
.dialog-tabs button {
    height: 24px;
    padding-bottom: 5px;
}
.dialog-tabs .selected {
    padding-bottom: 3px;
    border-bottom: 2px solid #ccc;
    color: #ccc;
}
.use-row {
    display: flex;
    align-items: center;
    gap: 9px;
    height: 24px;
    margin-top: 15px;
    color: #858585;
}
.dropdown {
    position: relative;
    width: 271px;
    color: #c0c0c0;
}
.dropdown select {
    width: 100%;
    height: 24px;
    background-color: #202020;
    border: 1px solid #2c2c2c;
}
.popup {
    position: absolute;
    left: 0;
    top: 24px;
    width: 281px;
    padding-bottom: 3px;
    background: #1c1c1c;
    border: 1px solid #353535;
    box-shadow: 2px 3px 4px rgba(0, 0, 0, 0.5);
}
.popup button {
    display: flex;
    align-items: center;
    width: 100%;
    height: 27px;
    padding-left: 27px;
}
.popup .chosen button {
    padding-left: 6px;
    gap: 9px;
    color: #3d8fe6;
}
.note {
    margin-top: 13px;
    line-height: 17px;
    color: #858585;
    white-space: nowrap;
}
.dialog-buttons {
    display: flex;
    justify-content: flex-end;
    gap: 12px;
    padding-top: 26px;
}
.dialog-buttons button {
    width: 113px;
    height: 25px;
    border: 2px solid #808080;
    border-radius: 13px;
    color: #858585;
}
.dialog-buttons .ok {
    border-color: #e6e6e6;
    color: #e6e6e6;
}
```
